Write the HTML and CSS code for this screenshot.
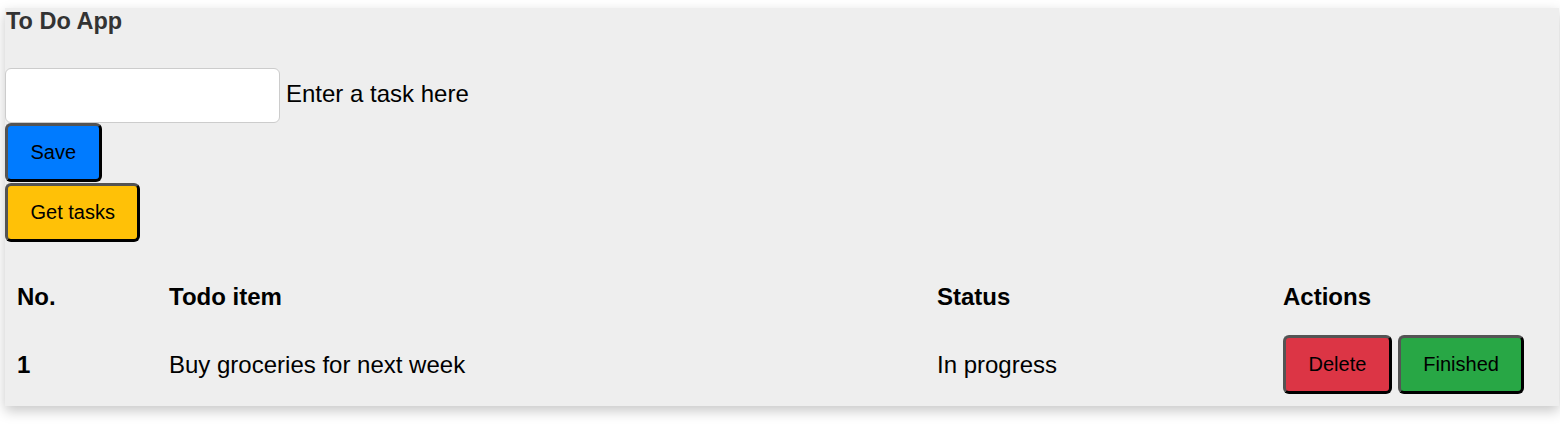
FILE: index.html
```html
<!DOCTYPE html>
<html lang="en">
<head>
    <meta charset="UTF-8">
    <meta name="viewport" content="width=device-width, initial-scale=1.0">
    <title>To Do App</title>
    <link rel="stylesheet" href="styles.css">
</head>
<body>
    <div class="app">
        <h3 class="app-title">To Do App</h3>

        <div class="task-form">
            <input type="text" id="taskInput" class="task-input">
            <label for="taskInput" class="task-label">Enter a task here</label>
        </div>

        <button class="btn btn-save">Save</button>
        <button class="btn btn-get">Get tasks</button>

        <table class="task-table">
            <thead>
                <tr>
                    <th class="col-no">No.</th>
                    <th class="col-item">Todo item</th>
                    <th class="col-status">Status</th>
                    <th class="col-actions">Actions</th>
                </tr>
            </thead>
            <tbody>
                <tr>
                    <th>1</th>
                    <td>Buy groceries for next week</td>
                    <td>In progress</td>
                    <td>
                        <div class="actions">
                            <button class="btn btn-delete">Delete</button>
                            <button class="btn btn-finish">Finished</button>
                        </div>
                    </td>
                </tr>
            </tbody>
        </table>
    </div>
</body>
</html>
```

FILE: styles.css
```css
/* Global Styles */
html {
    background-color: #fff;
}

body {
    margin: 0;
    padding: 8px 1px 20px 5px;
    font-family: "Liberation Sans", Arial, sans-serif;
    font-size: 24px;
    color: #000;
}

/* Card */
.app {
    background-color: #eeeeee;
    box-shadow: 0 5px 12px rgba(0, 0, 0, 0.22);
}

.app-title {
    margin: 0 0 33px 1px;
    font-size: 23.5px;
    line-height: 27px;
    font-weight: bold;
    color: #333;
}

/* Input row */
.task-form {
    display: flex;
    align-items: center;
    gap: 6px;
}

.task-input {
    box-sizing: border-box;
    width: 275px;
    height: 55px;
    margin: 0;
    border: 1px solid #ccc;
    border-radius: 6px;
    background-color: #fff;
}

.task-label {
    margin-bottom: 3px;
}

/* Buttons */
.btn {
    display: block;
    margin: 0;
    padding: 15px 22.5px;
    font-family: "Liberation Sans", Arial, sans-serif;
    font-size: 20px;
    line-height: 23px;
    color: #000;
    border: 3px outset #000;
    border-radius: 6px;
    cursor: pointer;
}

.btn-save {
    background-color: #007bff;
}

.btn-get {
    margin-top: 1px;
    background-color: #ffc107;
}

.btn-delete {
    background-color: #dc3545;
}

.btn-finish {
    background-color: #28a745;
}

/* Table */
.task-table {
    width: 100%;
    margin-top: 29px;
    border-collapse: collapse;
    text-align: left;
}

.task-table th,
.task-table td {
    padding: 12px;
    vertical-align: middle;
}

.col-no { width: 128px; }
.col-item { width: 744px; }
.col-status { width: 322px; }

.actions {
    display: flex;
    gap: 6px;
}
```
